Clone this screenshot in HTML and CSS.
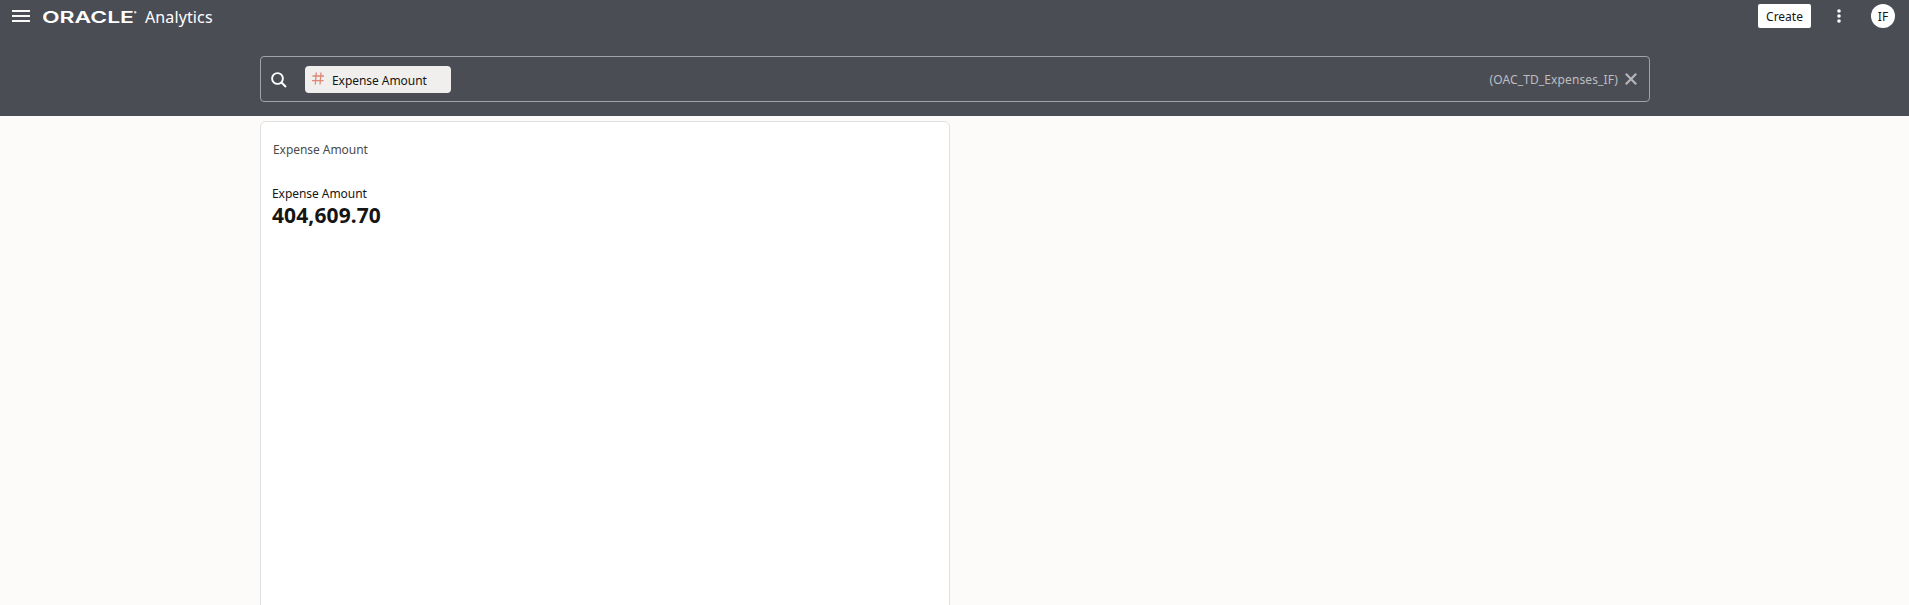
FILE: index.html
```html
<!DOCTYPE html>
<html lang="en">
<head>
<meta charset="utf-8">
<title>Oracle Analytics</title>
<link rel="stylesheet" href="styles.css">
</head>
<body>
<header class="header">
  <div class="topbar">
    <svg class="menu" width="18" height="14" viewBox="0 0 18 14"><path d="M0 2h18M0 7h18M0 12h18" stroke="#fbf9f8" stroke-width="2"/></svg>
    <svg class="brand" width="96" height="20" viewBox="0 0 96 20"><text class="wordmark" x="-1" y="17" textLength="92" lengthAdjust="spacingAndGlyphs">ORACLE</text><circle cx="92.2" cy="6.3" r="1.2" fill="#d9d9da"/></svg>
    <span class="product">Analytics</span>
    <button class="create">Create</button>
    <svg class="more" width="4" height="14" viewBox="0 0 4 14" fill="#fff"><circle cx="2" cy="2" r="1.8"/><circle cx="2" cy="7" r="1.8"/><circle cx="2" cy="12" r="1.8"/></svg>
    <span class="avatar">IF</span>
  </div>
  <div class="search">
    <svg class="glass" width="16" height="16" viewBox="0 0 16 16" fill="none" stroke="#fff" stroke-width="1.9"><circle cx="6.5" cy="6.5" r="5.4"/><path d="M10.5 10.5L15 15"/></svg>
    <span class="chip"><svg class="hash" width="12" height="13" viewBox="0 0 12 13" fill="none" stroke="#dc8778" stroke-width="1.3"><path d="M4.3 .5L3.3 12.5M9 .5L8 12.5M.5 4h11.5M0 8.7h11.5"/></svg><span class="chip-label">Expense Amount</span></span>
    <span class="source">(OAC_TD_Expenses_IF)</span>
    <svg class="close" width="12" height="12" viewBox="0 0 12 12"><path d="M.8 .8l10.4 10.4M11.2 .8L.8 11.2" stroke="#b5b6b9" stroke-width="2.2"/></svg>
  </div>
</header>
<main class="card">
  <h2 class="title">Expense Amount</h2>
  <div class="measure">Expense Amount</div>
  <div class="value">404,609.70</div>
</main>
</body>
</html>
```
FILE: styles.css
```css
* { box-sizing: border-box; }
body {
  margin: 0;
  height: 605px;
  overflow: hidden;
  background: #fcfbf9;
  color: #161513;
  font: 12px/16px "Noto Sans", sans-serif;
}
.header { height: 116px; background: #4b4d55; }
.topbar { display: flex; align-items: center; height: 32px; padding: 0 14px 0 12px; }
.menu { margin-right: 13px; }
.brand { margin-right: 6px; }
.wordmark { font: 600 16.2px Inter, sans-serif; fill: #fff; }
.product { color: #fff; font-size: 16px; line-height: 24px; letter-spacing: 0.12px; padding-top: 1px; }
.create {
  width: 53px;
  height: 24px;
  margin-left: auto;
  padding: 0;
  border: 0;
  border-radius: 2px;
  background: #fff;
  color: #161513;
  font: 12px/24px "Noto Sans", sans-serif;
  padding-top: 1px;
}
.more { margin: 0 30px 0 26px; }
.avatar {
  width: 24px;
  height: 24px;
  border-radius: 50%;
  background: #fff;
  font-size: 12px;
  line-height: 25px;
  text-align: center;
}
.search {
  display: flex;
  align-items: center;
  width: 1390px;
  height: 46px;
  margin: 24px 0 0 260px;
  padding: 0 12px 0 10px;
  border: 1px solid #a2a3a7;
  border-radius: 4px;
}
.glass { margin-top: 1px; }
.chip {
  display: flex;
  align-items: center;
  width: 146px;
  height: 27px;
  margin-left: 18px;
  padding-left: 7px;
  border-radius: 4px;
  background: #f1efed;
}
.hash { margin: -2px 8px 0 0; }
.chip-label { padding-top: 3px; letter-spacing: -0.05px; }
.source { margin-left: auto; padding-top: 2px; color: #bdbec1; letter-spacing: 0.12px; }
.close { margin-left: 7px; }
.card {
  width: 690px;
  height: 500px;
  margin: 5px 0 0 260px;
  padding: 20px 11px;
  border: 1px solid #e1e0de;
  border-radius: 6px;
  background: #fff;
}
.title { margin: 0 0 28px 1px; color: #4b4b4d; font-size: 12px; font-weight: 400; line-height: 16px; letter-spacing: -0.05px; }
.measure { letter-spacing: -0.05px; }
.value { font-size: 21px; font-weight: 700; line-height: 26px; letter-spacing: 0.1px; }
```
